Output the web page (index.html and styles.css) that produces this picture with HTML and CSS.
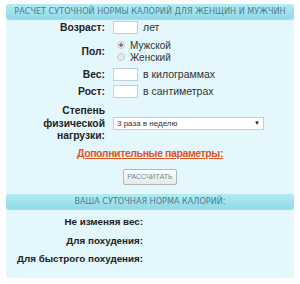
FILE: index.html
```html
<!DOCTYPE html>
<html lang="ru">
  <head>
    <meta charset="UTF-8" />
    <title>Калькулятор калорий</title>
    <link rel="stylesheet" href="styles.css">
  </head>
  <body>
    <div class="calc">
      <div class="calc-head">Расчет суточной нормы калорий для женщин и мужчин</div>

      <div class="row row-age">
        <div class="lbl">Возраст:</div>
        <div class="val"><span class="box"></span><span class="unit">лет</span></div>
      </div>
      <div class="row row-sex">
        <div class="lbl">Пол:</div>
        <div class="val radios">
          <div class="radio"><span class="dot on"></span>Мужской</div>
          <div class="radio"><span class="dot"></span>Женский</div>
        </div>
      </div>
      <div class="row row-w">
        <div class="lbl">Вес:</div>
        <div class="val"><span class="box"></span><span class="unit">в килограммах</span></div>
      </div>
      <div class="row row-h">
        <div class="lbl">Рост:</div>
        <div class="val"><span class="box"></span><span class="unit">в сантиметрах</span></div>
      </div>
      <div class="row row-load">
        <div class="lbl">Степень<br />физической<br />нагрузки:</div>
        <div class="val">
          <div class="select"><span>3 раза в неделю</span><span class="arrow">&#9660;</span></div>
        </div>
      </div>

      <div class="more"><a href="#">Дополнительные параметры:</a></div>
      <div class="actions"><span class="btn">Рассчитать</span></div>

      <div class="calc-head">Ваша суточная норма калорий:</div>
      <div class="result">
        <div class="res-row"><div class="lbl">Не изменяя вес:</div></div>
        <div class="res-row"><div class="lbl">Для похудения:</div></div>
        <div class="res-row"><div class="lbl">Для быстрого похудения:</div></div>
      </div>
    </div>
  </body>
</html>
```

FILE: styles.css
```css
body {
  margin: 0;
  background: #fff;
  font-family: "Liberation Sans", Arial, sans-serif;
  color: #222;
}
.calc {
  margin: 4px 6px 0;
  width: 288px;
  height: 274px;
  background: #e4f7fd;
}
.calc-head {
  height: 15px;
  line-height: 15px;
  text-align: center;
  text-transform: uppercase;
  font-family: "Liberation Sans Narrow", "DejaVu Sans Condensed", sans-serif;
  font-size: 9px;
  color: #4d7c8a;
  background: linear-gradient(#b4ebf4, #90d9e7);
  border-radius: 3px;
  box-shadow: 0 1px 1px rgba(80, 150, 170, 0.35);
}
.row {
  display: flex;
  align-items: center;
}
.lbl {
  font-weight: bold;
  font-size: 10.3px;
  text-align: right;
  white-space: nowrap;
  color: #222;
}
.row .lbl {
  width: 99px;
  margin-right: 8px;
}
.val {
  display: flex;
  align-items: center;
}
.row-age { height: 16px; }
.row-sex { height: 26px; margin-top: 3px; }
.row-w { height: 14px; margin-top: 3px; }
.row-h { height: 14px; margin-top: 3px; }
.row-load { margin-top: 7px; line-height: 12.5px; }
.box {
  width: 23px;
  height: 11px;
  background: #fff;
  border: 1px solid #c6cfd3;
}
.unit {
  margin-left: 5px;
  color: #333;
  font-size: 10.5px;
}
.radios {
  flex-direction: column;
  align-items: flex-start;
}
.radio {
  display: flex;
  align-items: center;
  height: 12px;
  padding-left: 4px;
  font-size: 10px;
  color: #333;
}
.dot {
  width: 6px;
  height: 6px;
  margin-right: 5px;
  border-radius: 50%;
  border: 1px solid #c8c8c8;
  background: #eaeaea;
}
.dot.on {
  background: radial-gradient(#777 0, #777 1.5px, #eee 2px);
}
.select {
  display: flex;
  justify-content: space-between;
  align-items: center;
  width: 143px;
  height: 11px;
  padding: 0 3px;
  background: #fff;
  border: 1px solid #c6cfd3;
  font-size: 8px;
  line-height: 11px;
  color: #333;
}
.arrow {
  font-size: 6px;
  color: #222;
}
.more {
  margin-top: 3px;
  height: 14px;
  line-height: 14px;
  text-align: center;
  font-size: 10.5px;
  letter-spacing: -0.4px;
  font-weight: bold;
}
.more a {
  color: #e0541f;
  text-decoration: underline;
}
.actions {
  margin-top: 5px;
  height: 16px;
  margin-bottom: 13px;
  text-align: center;
}
.btn {
  display: inline-block;
  padding: 0 3px;
  height: 14px;
  line-height: 14px;
  font-size: 7px;
  text-transform: uppercase;
  color: #5a8c9c;
  background: linear-gradient(#ffffff, #e8e8e8);
  border: 1px solid #b5b5b5;
  border-radius: 2px;
}
.result {
  padding-top: 4px;
}
.res-row {
  height: 18.5px;
  display: flex;
  align-items: center;
}
.result .lbl {
  width: 137px;
  font-size: 9.8px;
}
```
